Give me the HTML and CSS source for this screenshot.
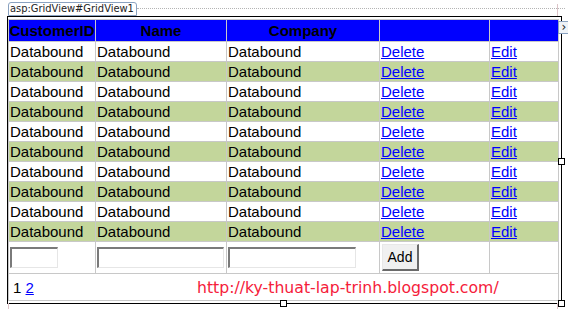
FILE: index.html
```html
<!DOCTYPE html>
<html>
<head>
<meta charset="utf-8">
<link rel="stylesheet" href="styles.css">
</head>
<body>
<div class="designer">
  <div class="tagrow">
    <span class="tag">asp:GridView#GridView1</span>
    <span class="dots"></span>
  </div>
  <div class="frame">
    <table class="grid">
      <colgroup>
        <col class="c1"><col class="c2"><col class="c3"><col class="c4"><col class="c5">
      </colgroup>
      <thead>
        <tr><th>CustomerID</th><th>Name</th><th>Company</th><th></th><th></th></tr>
      </thead>
      <tbody>
        <tr><td>Databound</td><td>Databound</td><td>Databound</td><td><a href="#">Delete</a></td><td><a href="#">Edit</a></td></tr>
        <tr class="alt"><td>Databound</td><td>Databound</td><td>Databound</td><td><a href="#">Delete</a></td><td><a href="#">Edit</a></td></tr>
        <tr><td>Databound</td><td>Databound</td><td>Databound</td><td><a href="#">Delete</a></td><td><a href="#">Edit</a></td></tr>
        <tr class="alt"><td>Databound</td><td>Databound</td><td>Databound</td><td><a href="#">Delete</a></td><td><a href="#">Edit</a></td></tr>
        <tr><td>Databound</td><td>Databound</td><td>Databound</td><td><a href="#">Delete</a></td><td><a href="#">Edit</a></td></tr>
        <tr class="alt"><td>Databound</td><td>Databound</td><td>Databound</td><td><a href="#">Delete</a></td><td><a href="#">Edit</a></td></tr>
        <tr><td>Databound</td><td>Databound</td><td>Databound</td><td><a href="#">Delete</a></td><td><a href="#">Edit</a></td></tr>
        <tr class="alt"><td>Databound</td><td>Databound</td><td>Databound</td><td><a href="#">Delete</a></td><td><a href="#">Edit</a></td></tr>
        <tr><td>Databound</td><td>Databound</td><td>Databound</td><td><a href="#">Delete</a></td><td><a href="#">Edit</a></td></tr>
        <tr class="alt"><td>Databound</td><td>Databound</td><td>Databound</td><td><a href="#">Delete</a></td><td><a href="#">Edit</a></td></tr>
        <tr class="insert">
          <td><input class="in-id" type="text"></td>
          <td><input class="in-name" type="text"></td>
          <td><input class="in-company" type="text"></td>
          <td><button class="add" type="button">Add</button></td>
          <td></td>
        </tr>
        <tr class="pager">
          <td colspan="5">
            <div class="pager-inner">
              <span class="pages"><span>1</span> <a href="#">2</a></span>
              <span class="url">http://ky-thuat-lap-trinh.blogspot.com/</span>
            </div>
          </td>
        </tr>
      </tbody>
    </table>
    <span class="smarttag">&#8250;</span>
    <span class="handle h-right"></span>
    <span class="handle h-bottom"></span>
    <span class="handle h-corner"></span>
  </div>
  <span class="guide g-top-right"></span>
  <span class="guide g-bottom-left"></span>
  <span class="guide g-bottom-right"></span>
</div>
</body>
</html>
```

FILE: styles.css
```css
html, body {
  margin: 0;
  padding: 0;
  background: #ffffff;
}

body {
  font-family: "Liberation Sans", Arial, sans-serif;
  font-size: 15px;
  color: #000;
  width: 568px;
  height: 309px;
  overflow: hidden;
}

.designer {
  position: relative;
  padding-top: 2px;
}

.tagrow {
  display: flex;
  align-items: center;
  height: 14px;
  margin-left: 8px;
}

.tag {
  box-sizing: border-box;
  height: 14px;
  border: 1px solid #8aa2c0;
  border-radius: 3px 3px 0 0;
  font-family: "DejaVu Sans Condensed", "DejaVu Sans", sans-serif;
  font-size: 11px;
  line-height: 12px;
  color: #222;
  padding: 0 2px 0 1px;
  white-space: nowrap;
  background: #fff;
}

.dots {
  flex: 1;
  height: 0;
  border-top: 1px dotted #b4b4b4;
  margin-right: 3px;
  margin-top: -2px;
}

.frame {
  position: relative;
  margin-left: 7px;
  width: 550px;
  border: 1px solid #000;
  padding: 2px 3px 2px 0;
}

.grid {
  border-collapse: collapse;
  table-layout: fixed;
  width: 550px;
  border: 1px solid #c8c8c8;
}

.c1 { width: 87px; }
.c2 { width: 131px; }
.c3 { width: 153px; }
.c4 { width: 110px; }
.c5 { width: 69px; }

.grid th,
.grid td {
  border: 1px solid #c8c8c8;
  padding: 0 0 0 1px;
  height: 19px;
  line-height: 17px;
  white-space: nowrap;
  overflow: hidden;
  text-align: left;
  vertical-align: middle;
}

.grid th {
  background: #0000ff;
  font-weight: bold;
  text-align: center;
  height: 21px;
  padding: 0;
}

.grid tr.alt td {
  background: #c3d69b;
}

.grid a {
  color: #0000ff;
  text-decoration: underline;
}

.grid tr.insert td {
  height: 31px;
  padding-left: 1px;
}

.grid input {
  box-sizing: border-box;
  height: 21px;
  margin: 0;
  padding: 0;
  border-style: solid;
  border-width: 2px 1px 1px 2px;
  border-color: #7a7a7a #e6e6e6 #e6e6e6 #7a7a7a;
  background: #fff;
  display: block;
}

.in-id { width: 48px; }
.in-name { width: 127px; }
.in-company { width: 128px; }

.add {
  box-sizing: border-box;
  display: block;
  width: 37px;
  height: 27px;
  margin: 0 0 0 1px;
  padding: 0;
  background: #f0f0f0;
  border-style: solid;
  border-width: 1px 2px 2px 1px;
  border-color: #e8e8e8 #6a6a6a #6a6a6a #e8e8e8;
  font-family: "Liberation Sans", Arial, sans-serif;
  font-size: 14px;
  color: #000;
}

.grid tr.pager td {
  height: 26px;
  padding: 0 0 0 4px;
}

.pager-inner {
  display: flex;
  align-items: center;
}

.pages {
  width: 28px;
}

.url {
  margin-left: 156px;
  font-family: "DejaVu Sans", sans-serif;
  font-size: 15.7px;
  color: #f5203a;
}

.smarttag {
  position: absolute;
  left: 550px;
  top: 4px;
  box-sizing: border-box;
  width: 12px;
  height: 13px;
  border: 1px solid #8aa2c0;
  background: #eef2f7;
  font-family: "DejaVu Sans", sans-serif;
  font-size: 12px;
  line-height: 10px;
  text-align: center;
  color: #222;
}

.handle {
  position: absolute;
  box-sizing: border-box;
  width: 7px;
  height: 7px;
  border: 1px solid #000;
  background: #fff;
}

.h-right { left: 550px; top: 141px; }
.h-bottom { left: 272px; top: 283px; }
.h-corner { left: 550px; top: 283px; }

.guide {
  position: absolute;
  width: 1px;
  background: #dcc4c8;
}

.g-top-right { left: 557px; top: 4px; height: 12px; }
.g-bottom-left { left: 8px; top: 303px; height: 6px; }
.g-bottom-right { left: 557px; top: 303px; height: 6px; }
```
